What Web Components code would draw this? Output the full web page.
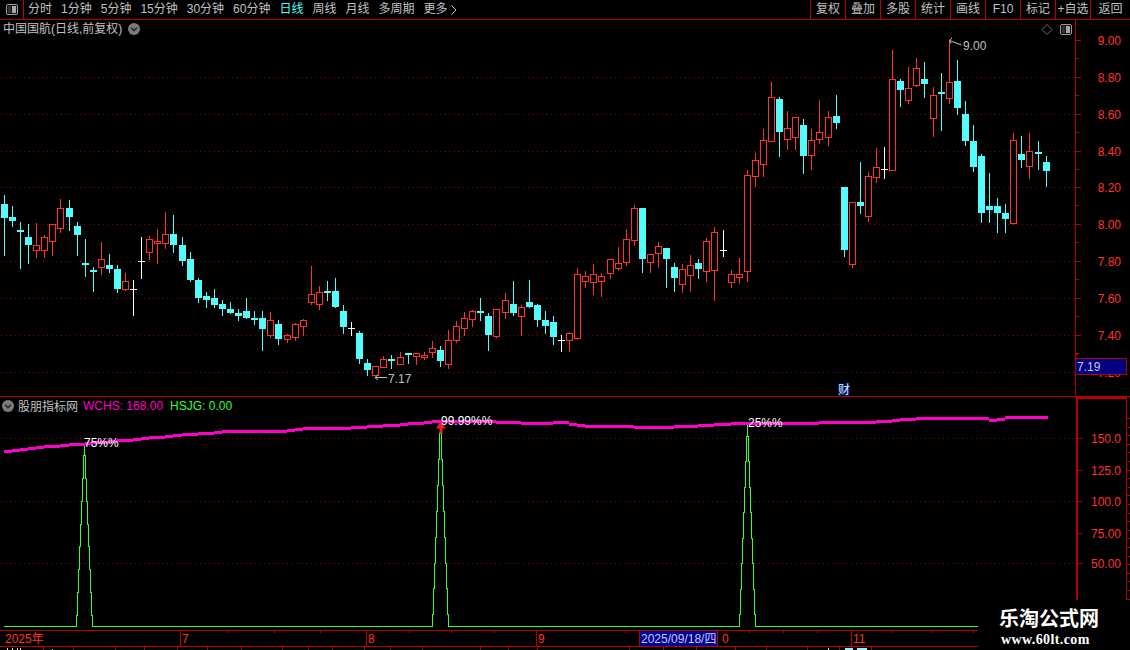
<!DOCTYPE html>
<html lang="zh"><head><meta charset="utf-8"><title>中国国航</title>
<style>
html,body{margin:0;padding:0;background:#000;overflow:hidden}
body{width:1130px;height:650px;font:12px "Liberation Sans","Noto Sans CJK SC",sans-serif;color:#c0c0c0}
</style></head><body>
<app-shell>
  <tool-bar>
    <tool-item>分时</tool-item><tool-item>1分钟</tool-item><tool-item>5分钟</tool-item><tool-item>15分钟</tool-item><tool-item>30分钟</tool-item><tool-item>60分钟</tool-item><tool-item active>日线</tool-item><tool-item>周线</tool-item><tool-item>月线</tool-item><tool-item>多周期</tool-item><tool-item more>更多</tool-item>
    <tool-button slot="right">复权</tool-button><tool-button slot="right">叠加</tool-button><tool-button slot="right">多股</tool-button><tool-button slot="right">统计</tool-button><tool-button slot="right">画线</tool-button><tool-button slot="right">F10</tool-button><tool-button slot="right">标记</tool-button><tool-button slot="right">+自选</tool-button><tool-button slot="right" last>返回</tool-button>
  </tool-bar>
  <price-panel></price-panel>
  <indicator-panel></indicator-panel>
  <date-axis></date-axis>
  <water-mark></water-mark>
</app-shell>
<script>
const RED='#ff3232',CY='#54fcfc',BORDER='#b80000',GRID='#8c0000',GREEN='#33ff33',MAG='#ff00c8';
const rect=(x,y,w,h,f)=>`<rect x="${x}" y="${y}" width="${w}" height="${h}" fill="${f}"/>`;
const dots=(y,x1=0,x2=1075)=>{let s='';for(let x=x1+1;x<x2;x+=4.62)s+=rect(Math.round(x),y,1,1,GRID);return s};
const sheet=(css,html)=>{const t=document.createElement('template');t.innerHTML=`<style>${css}</style>${html}`;return t};
function define(name,css,html,setup){
  const t=sheet(css,html);
  customElements.define(name,class extends HTMLElement{
    constructor(){super();this.attachShadow({mode:'open'}).appendChild(t.content.cloneNode(true));}
    connectedCallback(){if(setup)setup.call(this,this.shadowRoot)}
  });
}
define('app-shell',`:host{display:flex;flex-direction:column;width:1130px;height:650px;position:relative;overflow:hidden;background:#000}`,`<slot></slot>`);

define('round-chevron',`:host{display:inline-block;width:12px;height:12px;line-height:0}`,
`<svg width="12" height="12" viewBox="0 0 12 12"><circle cx="6" cy="6" r="6" fill="#7c7c7c"/><path d="M3 4.6 6 7.6 9 4.6" fill="none" stroke="#2a2a2a" stroke-width="1.5"/></svg>`);

define('panel-icon',`:host{display:inline-block;width:12px;height:11px;line-height:0}`,
`<svg width="12" height="11" viewBox="0 0 12 11" shape-rendering="crispEdges"><rect x=".5" y=".5" width="11" height="10" rx="2" fill="#111" stroke="#9a9a9a"/><rect x="6" y="2" width="4" height="7" fill="#a8a8a8"/><rect x="2" y="2" width="3" height="7" fill="#333"/></svg>`);

define('tool-bar',`
:host{display:flex;height:19px;border-bottom:1px solid ${BORDER};flex:none;align-items:stretch}
.ico{width:23px;border-right:1px solid ${BORDER};display:flex;align-items:center;justify-content:center}
.left{display:flex;gap:9px;padding-left:4px;align-items:center;flex:1}
.right{display:flex}
`,`<div class="ico"><panel-icon></panel-icon></div><div class="left"><slot></slot></div><div class="right"><slot name="right"></slot></div>`);

define('tool-item',`
:host{display:inline-flex;align-items:center;gap:3px;font-size:12px;line-height:19px;color:#c0c0c0;white-space:nowrap}
:host([active]){color:${CY}}
svg{display:none}
:host([more]) svg{display:block}
`,`<slot></slot><svg width="6" height="10" viewBox="0 0 6 10"><path d="M.5.5 5 5 .5 9.5" fill="none" stroke="#c0c0c0"/></svg>`);

define('tool-button',`
:host{display:flex;align-items:center;justify-content:center;width:34px;border-left:1px solid ${BORDER};font-size:12px;line-height:19px;color:#c0c0c0;white-space:nowrap}
:host([last]){width:39px}
`,`<slot></slot>`);

const C=[
['c',15,197,42,86],['c',48,108,81,93],['c',96,236,120,126],['c',102,219,141,167],['r',99,201,166,182],['r',136,201,142,182],['r',102,197,103,155],['r',27,126,55,116],['c',30,120,54,81],['c',96,197,108,135],
['c',147,258,219,225],['c',231,303,240,246],['r',156,252,208,233],['c',192,246,225,237],['c',225,306,237,297],['r',249,300,274,299],['w',270,375,297,300],['w',141,264,213,216],['r',138,207,148,188],['r',117,219,154,161],
['r',66,174,133,161],['c',75,186,132,165],['c',141,225,165,213],['c',186,273,207,270],['c',264,336,270,324],['c',306,351,318,330],['c',297,351,324,345],['c',330,375,342,357],['c',336,369,357,369],['c',357,390,369,378],
['c',324,384,363,384],['c',363,402,384,390],['c',363,480,384,417],['r',366,441,391,437],['c',390,462,402,447],['r',432,456,436,449],['r',399,450,403,443],['r',387,435,391,410],['r',228,342,313,338],['r',288,357,307,344],
['c',273,330,303,306],['c',264,351,303,351]].map(a=>[...a,190,3]);
const D=[
['c',315,399,333,381],['w',366,405,385,388],['c',393,489,399,477],['c',477,525,489,510],['r',498,525,499,525],['r',468,501,478,501],['c',465,504,477,483],['r',456,492,472,492],['c',459,489,459,465],['r',459,492,460,468],
['r',456,477,465,473],['r',423,471,445,456],['c',438,498,450,483],['r',390,504,420,492],['r',363,426,378,420],['r',336,405,354,384],['r',330,378,333,357],['c',294,360,333,339],['c',339,450,348,405],['r',327,411,327,408],
['r',279,354,300,336],['c',243,345,312,339],['r',315,405,321,348],['c',240,321,306,321],['c',312,378,315,360],['c',333,399,360,378],['c',348,432,366,411],['w',405,453,420,423],['r',396,453,400,420],['r',204,417,222,414],
['r',213,261,228,243],['r',192,282,222,246],['r',219,288,228,243],['r',177,234,177,219],['r',141,210,190,204],['r',87,195,117,186],['r',15,135,24,120],['c',24,216,24,177],['r',162,216,162,186],['r',126,201,138,159],
['c',144,261,144,177],['c',189,273,201,234]].map(a=>[...a,200,3]);
const E=[
['r',522,606,537,582],['r',495,603,525,555],['c',507,564,519,537],['r',444,573,453,543],['r',411,632,426,540],['w',420,498,480,483],['r',540,591,552,576],['r',504,579,552,561],['r',240,573,255,543],['r',189,288,210,258],
['r',117,258,150,222],['r',-24,153,21,153],['c',21,198,27,126],['r',63,177,114,147],['r',81,177,81,141],['c',87,249,105,198],['r',117,237,150,195],['r',30,159,126,147],['r',63,165,81,141],['c',15,114,78,99],
['c',291,498,291,480],['r',336,531,336,522],['c',216,369,336,348],['r',246,393,258,378],['r',174,276,231,261]].map(a=>[...a,90,3]);
const F=[
['w',351,444,417,420],['r',60,420,147,420],['c',147,228,153,180],['r',111,219,175,210],['r',84,168,114,165],['c',96,201,147,162],['r',171,318,195,264],['c',129,300,186,189],['r',30,219,156,204],['c',90,252,153,234],
['c',213,345,252,333],['c',285,423,333,411],['c',372,576,378,549],['c',429,576,528,540],['c',504,606,528,549],['c',522,606,549,567],['r',309,582,330,579],['c',318,411,372,390],['r',309,444,363,408],['c',333,417,366,372],['c',378,468,396,423]].map(a=>[...a,30,3]);
const CANDLES=[...C,...D,...E,...F];
const col=i=>Math.floor(4.4+8.075*i);

function candles(){
  let s='';
  CANDLES.forEach((k,i)=>{
    const [t,h,l,bt,bb,off]=k,c=col(i);
    const Y=v=>Math.floor(off+v/3);
    const hi=Y(h),lo=Y(l);
    let top=Y(bt),bot=Y(bb);
    if(t==='w'){s+=rect(c,hi,1,lo-hi+1,'#fff')+rect(c-3,top,7,1,'#fff');return}
    if(bot-top<2)bot=top+2;
    if(t==='c'){
      s+=rect(c,hi,1,lo-hi+1,CY)+rect(c-3,top,7,bot-top,CY);
    }else{
      s+=rect(c,hi,1,lo-hi+1,RED)+rect(c-3,top,7,bot-top+1,RED)+rect(c-2,top+1,5,bot-top-1,'#000');
    }
  });
  return s;
}

const LABELCSS=`text{font:12px "Liberation Sans","Noto Sans CJK SC",sans-serif}`;
define('price-panel',`
:host{display:grid;height:376px;border-bottom:1px solid ${BORDER};flex:none}
:host>*{grid-area:1/1}
svg{display:block}
${LABELCSS}
.head{display:flex;align-items:center;gap:6px;height:18px;padding-left:3px;align-self:start;font-size:12px;line-height:18px;color:#c0c0c0;white-space:nowrap}
.ctl{justify-self:end;align-self:start;margin:4px 58px 0 0;display:flex;gap:7px;align-items:center}
`,`<svg id="c" width="1130" height="376" viewBox="0 20 1130 376" shape-rendering="crispEdges"></svg>
<div class="head"><span>中国国航(日线,前复权)</span><round-chevron></round-chevron></div>
<div class="ctl"><svg width="12" height="11" viewBox="0 0 12 11"><path d="M6 .5 11 5.5 6 10.5 1 5.5Z" fill="none" stroke="#6e6e6e" shape-rendering="geometricPrecision"/></svg><panel-icon></panel-icon></div>`,
function(r){
  let s='';
  const rows=[77,114,151,187,224,261,298,335,372];
  rows.forEach(y=>s+=dots(y));
  s+=candles();
  s+=rect(1075,20,1,376,BORDER);
  const ys=[40,77,114,151,187,224,261,298,335,372],lb=['9.00','8.80','8.60','8.40','8.20','8.00','7.80','7.60','7.40','7.20'];
  ys.forEach((y,i)=>{
    s+=rect(1076,y,5,1,BORDER);
    if(i<ys.length-1)s+=rect(1076,y+18,3,1,BORDER);
    s+=`<text x="1121" y="${y+5}" text-anchor="end" fill="${RED}">${lb[i]}</text>`;
  });
  s+=rect(1076,354,2,1,BORDER);
  s+=rect(1075,358,52,17,BORDER)+rect(1076,359,50,15,'#000080');
  s+=`<text x="1077" y="371" fill="#c8c8e8">7.19</text>`;
  s+=`<g shape-rendering="geometricPrecision" fill="none" stroke="#c0c0c0"><path d="M375 377.5H387M378 375 375 377.5 378 380"/><path d="M949.5 40.5 961.5 45M952 38 949.5 40.5 951 43.5"/></g>`;
  s+=`<text x="388" y="383" fill="#c0c0c0">7.17</text><text x="963" y="50" fill="#c0c0c0">9.00</text>`;
  s+=rect(838,383,12,13,'#00105c')+`<text x="838" y="394" fill="#d8ecff">财</text>`;
  r.getElementById('c').innerHTML=s;
});

function spike(cx,lv){
  let L=`M${cx-8+.5} ${lv[0]+.5}`;
  for(let n=0;n<9;n++){L+=` V${lv[n+1]+.5}`;if(n<8)L+=` H${cx-8+n+1+.5}`;}
  L+=` H${cx+.5}`;
  let R=`M${cx+8+.5} ${lv[0]+.5}`;
  for(let n=0;n<9;n++){R+=` V${lv[n+1]+.5}`;if(n<8)R+=` H${cx+8-n-1+.5}`;}
  R+=` H${cx+.5}`;
  return L+' '+R;
}
define('indicator-panel',`
:host{display:grid;height:233px;border-bottom:1px solid ${BORDER};flex:none}
:host>*{grid-area:1/1}
svg{display:block}
${LABELCSS}
.head{display:flex;align-items:center;gap:4px;height:17px;padding:0 0 0 2px;align-self:start;font-size:12px;white-space:nowrap;color:#c0c0c0}
.name{margin-right:1px}
.w{color:${MAG};margin-right:3px}.h{color:${GREEN}}
`,`<svg id="c" width="1130" height="233" viewBox="0 397 1130 233" shape-rendering="crispEdges"></svg>
<div class="head"><round-chevron></round-chevron><span class="name">股朋指标网</span><span class="w">WCHS: 168.00</span><span class="h">HSJG: 0.00</span></div>`,
function(r){
  let s='';
  [438,501,563].forEach(y=>s+=dots(y));
  let base=`M4 626.5H${76.5}M${92.5} 626.5H432.5M448.5 626.5H739.5M755.5 626.5H978`;
  const sp=spike(84,[626,615,592,569,546,524,501,478,455,443])+' '+spike(440,[626,614,588,563,537,511,485,459,433,420])+' '+spike(747,[626,614,589,563,538,512,487,461,436,423]);
  s+=`<path d="${base} ${sp}" fill="none" stroke="${GREEN}"/>`;
  const A=[[4,451.3],[17,449.2],[33,447.3],[50,445.7],[83,443.3],[133,439],[183,434.3],[233,430.7],[260,430.7],[267,431.7],[290,430],[300,428],[350,427.5],[390,425],[402,423.3],[420,422.7],[428,420.7],[440,420.5],[470,420.5],[500,422],[530,423],[560,422],[580,426],[620,426],[655,427.5],[700,425],[740,423],[760,422.5],[800,423.5],[830,421.5],[870,421.5],[920,418],[985,418],[990,420],[1005,417],[1048,417]];
  const at=x=>{for(let i=1;i<A.length;i++)if(x<=A[i][0]){const[a,b]=[A[i-1],A[i]];return a[1]+(b[1]-a[1])*(x-a[0])/(b[0]-a[0])}return 417};
  for(let i=0;i<130;i++){const x=col(i),x2=Math.min(1048,col(i+1));s+=rect(x,Math.round(at(x))-1,x2-x,3,MAG)}
  s+=`<path d="M440.7 421.5 436 428.5H439.5V433.5H442.5V428.5H446Z" fill="#f02020" shape-rendering="geometricPrecision"/>`;
  [['75%%',84,447],['99.99%%',441,425],['25%%',748,427]].forEach(t=>s+=`<text x="${t[1]}" y="${t[2]}" fill="#fff">${t[0]}</text>`);
  s+=rect(1076,397,2,233,BORDER)+rect(1076,397,51,2,BORDER)+rect(1126,397,1,233,BORDER);
  [[438,'150.0'],[470,'125.0'],[501,'100.0'],[533,'75.00'],[563,'50.00']].forEach(([y,t])=>{
    s+=rect(1078,y,4,1,BORDER)+`<text x="1121" y="${y+5}" text-anchor="end" fill="${RED}">${t}</text>`;
  });
  for(let y=418,n=0;y<600;y+=8.6,n++)s+=rect(n%3?1128:1127,Math.round(y),n%3?2:3,1,BORDER);
  r.getElementById('c').innerHTML=s;
});

define('date-axis',`
:host{display:block;height:19px;flex:none}
svg{display:block}
${LABELCSS}
`,`<svg id="c" width="1130" height="19" viewBox="0 631 1130 19" shape-rendering="crispEdges"></svg>`,
function(r){
  let s=rect(0,646,1130,1,BORDER);
  [227,274,320,409,451,494,625,749,783,817,892,932,973].forEach(x=>s+=rect(x,631,1,2,BORDER));
  [180,366,536,851].forEach(x=>s+=rect(x,631,1,15,BORDER));
  [[5,'2025年'],[182,'7'],[368,'8'],[538,'9'],[853,'11'],[722,'0']].forEach(([x,t])=>s+=`<text x="${x}" y="643" fill="${RED}">${t}</text>`);
  s+=rect(639,631,1,15,BORDER)+rect(640,631,77,15,'#000090')+rect(717,631,1,15,BORDER);
  s+=`<text x="641" y="643" fill="#c8c8f0">2025/09/18/四</text>`;
  [43,73,115,144,177,207,241,282,308,332,364,390,422,480,508,537,629,663,696,735,766,807,839,871].forEach(x=>s+=rect(x,647,1,3,BORDER));
  s+=rect(7,648,1,2,'#ddd')+rect(12,648,1,2,'#ddd')+rect(17,648,1,2,'#ddd')+rect(20,648,1,2,'#ddd')+rect(52,649,1,1,'#ddd')+rect(828,648,1,2,'#ddd')+rect(845,648,8,2,'#9ef')+rect(857,648,10,2,'#9ef');
  r.getElementById('c').innerHTML=s;
});

define('water-mark',`
:host{position:absolute;left:978px;top:600px;width:152px;height:50px;background:#000;color:#fff;display:flex;flex-direction:column;padding:6px 0 0 21px;box-sizing:border-box}
.a{font:700 20px/24px "Noto Sans CJK SC",sans-serif;white-space:nowrap}
.b{font:700 14px/16px "Liberation Serif",serif;letter-spacing:.4px;margin:2px 0 0 2px;white-space:nowrap}
`,`<div class="a">乐淘公式网</div><div class="b">www.60lt.com</div>`);
</script>
</body></html>
